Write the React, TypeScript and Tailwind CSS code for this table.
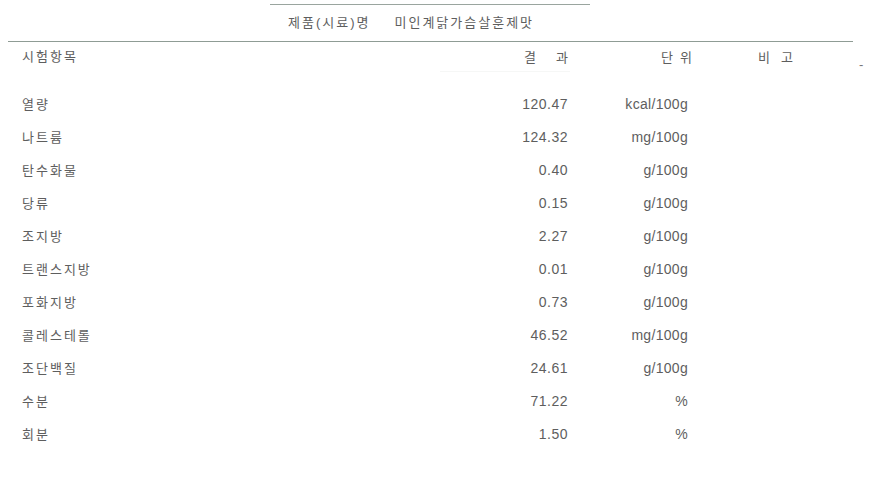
const ROWS: [string, string, string][] = [
  ['열량', '120.47', 'kcal/100g'],
  ['나트륨', '124.32', 'mg/100g'],
  ['탄수화물', '0.40', 'g/100g'],
  ['당류', '0.15', 'g/100g'],
  ['조지방', '2.27', 'g/100g'],
  ['트랜스지방', '0.01', 'g/100g'],
  ['포화지방', '0.73', 'g/100g'],
  ['콜레스테롤', '46.52', 'mg/100g'],
  ['조단백질', '24.61', 'g/100g'],
  ['수분', '71.22', '%'],
  ['회분', '1.50', '%'],
];

export default function App() {
  return (
    <div className="w-[873px] h-[498px] bg-white text-[#5e5e5e] font-['Liberation_Sans','Noto_Sans_CJK_KR',sans-serif] text-[14px] overflow-hidden">
      {/* ── Sample name ─────────────────────────────────────────── */}
      <div className="pt-[4px]">
        <div className="ml-[270px] w-[320px] border-t border-[#9aa59f] h-[37px] flex items-center pl-[18px] gap-[24px] text-[13px] tracking-[2px]">
          <span>제품(시료)명</span>
          <span>미인계닭가슴살훈제맛</span>
        </div>
      </div>

      {/* ── Table ───────────────────────────────────────────────── */}
      <div className="ml-[8px] w-[845px] border-t border-[#8f9c95]" />
      <div className="flex h-[29px] items-center text-[13px]">
        <div className="w-[480px] pl-[22px] tracking-[2px]">시험항목</div>
        <div className="w-[88px] flex justify-end gap-[20px] pt-[3px]">
          <span>결</span>
          <span>과</span>
        </div>
        <div className="w-[124px] flex justify-end gap-[7px] pt-[3px]">
          <span>단</span>
          <span>위</span>
        </div>
        <div className="w-[101px] flex justify-end gap-[11px] pt-[3px]">
          <span>비</span>
          <span>고</span>
        </div>
        <div className="ml-[66px] pt-[16px] text-[#777]">-</div>
      </div>
      <div className="ml-[440px] w-[130px] border-t border-[#f6f7f6]" />

      <div className="pt-[16px]">
        {ROWS.map(([label, value, unit]) => (
          <div key={label} className="flex h-[33px] items-center">
            <div className="w-[480px] pl-[22px] text-[13px] tracking-[2px]">{label}</div>
            <div className="w-[88px] text-right tracking-[0.5px]">{value}</div>
            <div className="w-[120px] text-right tracking-[0.3px]">{unit}</div>
          </div>
        ))}
      </div>
    </div>
  );
}
